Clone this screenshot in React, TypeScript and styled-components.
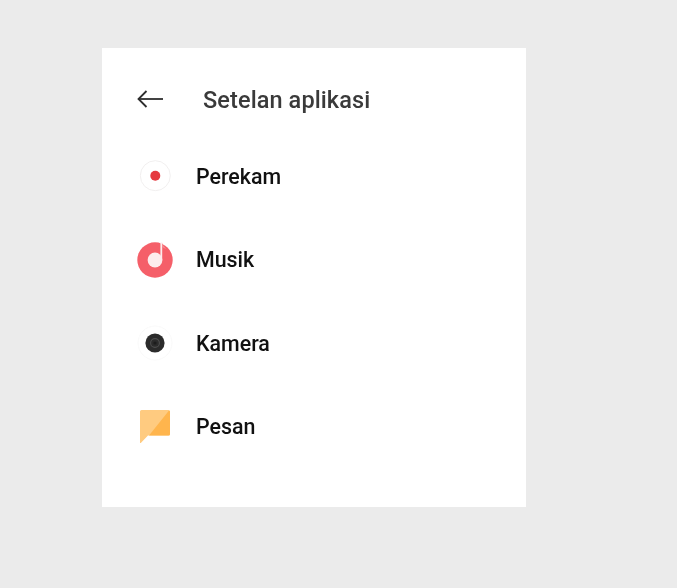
import React from "react";
import styled, { createGlobalStyle } from "styled-components";

const GlobalStyle = createGlobalStyle`
  html, body {
    margin: 0;
    padding: 0;
    background: #ebebeb;
  }
`;

const Page = styled.div`
  width: 677px;
  height: 588px;
  padding: 48px 0 0 102px;
  box-sizing: border-box;
  font-family: Roboto, "Liberation Sans", sans-serif;
`;

const Panel = styled.div`
  width: 424px;
  height: 459px;
  background: #ffffff;
  box-sizing: border-box;
  padding: 36px 0 0 35px;
`;

const Header = styled.div`
  display: flex;
  align-items: center;
  height: 30px;
  gap: 40px;
  margin-bottom: 44px;
  filter: blur(0.4px);
`;

const BackIcon = styled.svg`
  width: 26px;
  height: 20px;
  display: block;
`;

const Title = styled.div`
  font-size: 23.5px;
  font-weight: 500;
  color: #3a3a3a;
  letter-spacing: 0.1px;
  margin-top: 1px;
`;

const List = styled.div`
  display: flex;
  flex-direction: column;
  gap: 47.5px;
  filter: blur(0.4px);
`;

const Row = styled.div`
  display: flex;
  align-items: center;
  height: 36px;
  gap: 23px;
`;

const IconSlot = styled.svg`
  width: 36px;
  height: 36px;
  display: block;
  flex: none;
`;

const Label = styled.div`
  font-size: 21.4px;
  font-weight: 500;
  color: #111111;
`;

const RecorderIcon = () => (
  <IconSlot viewBox="0 0 36 36">
    <circle cx="18.3" cy="17.7" r="15" fill="#fff" stroke="#f1efef" strokeWidth="1" />
    <circle cx="18.3" cy="17.7" r="5" fill="#e5393f" />
  </IconSlot>
);

const MusicIcon = () => (
  <IconSlot viewBox="0 0 36 36">
    <circle cx="18" cy="18" r="17.7" fill="#f55f69" />
    <circle cx="18" cy="18" r="7.4" fill="#fdeced" />
    <path d="M23.4 .4h1.8v18h-1.8z" fill="#fdeced" />
    <path d="M25.2 .6c.4 3 2.2 4.6 4 6.4-1.6-.6-3-1.2-4-2.2z" fill="#f98d94" />
  </IconSlot>
);

const CameraIcon = () => (
  <IconSlot viewBox="0 0 36 36">
    <circle cx="18" cy="18" r="17" fill="#fff" stroke="#f9f9f9" strokeWidth="1" />
    <circle cx="18" cy="18" r="9.6" fill="#2b2b2b" />
    <circle cx="18" cy="18" r="4.4" fill="none" stroke="#4d4d4d" strokeWidth="1.1" />
    <circle cx="18" cy="18" r="1.6" fill="#1c1c1c" />
  </IconSlot>
);

const MessageIcon = () => (
  <IconSlot viewBox="0 0 36 36">
    <path
      d="M3 2.5A1.5 1.5 0 0 1 4.5 1h27A1.5 1.5 0 0 1 33 2.5v22.5a1.5 1.5 0 0 1-1.5 1.5H11l-7.2 7.5h-.8z"
      fill="#ffcb80"
    />
    <path
      d="M32 1.4a1.5 1.5 0 0 1 1 1.1v22.5a1.5 1.5 0 0 1-1.5 1.5H12z"
      fill="#ffb54d"
    />
  </IconSlot>
);

const items = [
  { name: "Perekam", Icon: RecorderIcon },
  { name: "Musik", Icon: MusicIcon },
  { name: "Kamera", Icon: CameraIcon },
  { name: "Pesan", Icon: MessageIcon },
];

const App: React.FC = () => {
  return (
    <Page>
      <GlobalStyle />
      <Panel>
        <Header>
          <BackIcon viewBox="0 0 26 20" fill="none" stroke="#2e2e2e" strokeWidth="1.8">
            <path d="M1.5 10H26" />
            <path d="M9.5 2L1.5 10l8 8" />
          </BackIcon>
          <Title>Setelan aplikasi</Title>
        </Header>
        <List>
          {items.map(({ name, Icon }) => (
            <Row key={name}>
              <Icon />
              <Label>{name}</Label>
            </Row>
          ))}
        </List>
      </Panel>
    </Page>
  );
};

export default App;
